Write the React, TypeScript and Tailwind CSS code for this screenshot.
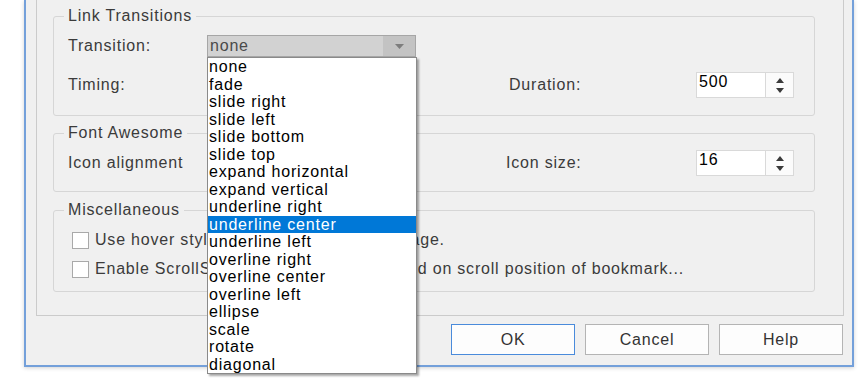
import React from 'react';

const transitions = [
  'none',
  'fade',
  'slide right',
  'slide left',
  'slide bottom',
  'slide top',
  'expand horizontal',
  'expand vertical',
  'underline right',
  'underline center',
  'underline left',
  'overline right',
  'overline center',
  'overline left',
  'ellipse',
  'scale',
  'rotate',
  'diagonal',
];

const Caret = ({ up }: { up?: boolean }) => (
  <svg width="8" height="5" viewBox="0 0 8 5">
    <path d={up ? 'M0 5 L4 0 L8 5 Z' : 'M0 0 L8 0 L4 5 Z'} fill="#3a3a3a" />
  </svg>
);

const SpinBox = ({ value }: { value: string }) => (
  <div className="flex h-[26px] w-[98px] border border-[#d9d9d9] bg-white">
    <div className="flex-1 pl-[2px] leading-[18px] text-black">{value}</div>
    <div className="flex w-[28px] flex-col items-center justify-center gap-[5px] border-l border-[#d9d9d9] bg-[#fbfbfb]">
      <Caret up />
      <Caret />
    </div>
  </div>
);

const Group = ({ title, children, className }: { title: string; children: React.ReactNode; className: string }) => (
  <fieldset className={`rounded-[3px] border border-[#d6d6d6] pl-[14px] ${className}`}>
    <legend className="-ml-[4px] px-[4px] leading-[20px] text-[#3b3b3b]">{title}</legend>
    {children}
  </fieldset>
);

const Check = ({ label }: { label: string }) => (
  <div className="flex h-[18px] items-center whitespace-nowrap pl-[4px]">
    <div className="h-[17px] w-[17px] shrink-0 border border-[#a9a9a9] bg-white" />
    <span className="ml-[6px] text-[#3b3b3b]">{label}</span>
  </div>
);

const Button = ({ label, primary }: { label: string; primary?: boolean }) => (
  <button
    className={`h-[31px] w-[124px] border bg-[#fdfdfd] text-[#333] ${primary ? 'border-[#4a8bdb]' : 'border-[#b4b4b4]'}`}
  >
    {label}
  </button>
);

export default function App() {
  return (
    <div className="relative h-[386px] w-[865px] overflow-hidden bg-white font-['Liberation_Sans',Arial,sans-serif] text-[16px] tracking-[0.8px]">
      <div className="ml-[24px] w-[830px] border-x-2 border-b-2 border-[#74a0da] bg-[#f0f0f0] shadow-[0_1px_4px_rgba(0,0,0,0.18)]">
        <div className="ml-[10px] mr-[8px] border-x border-b border-[#cbcbcb] pb-[23px] pl-[16px] pr-[28px] pt-[6px]">
          <Group title="Link Transitions" className="pb-[17px]">
            <div className="mt-[9px] flex h-[22px] items-center">
              <span className="w-[139px] text-[#3b3b3b]">Transition:</span>
              <div className="flex h-[22px] w-[209px] border border-[#a6a6a6] bg-[#d2d2d2]">
                <span className="flex-1 pl-[2px] leading-[20px] text-[#4a4a4a]">none</span>
                <div className="flex w-[32px] items-center justify-center bg-[#c3c3c3]">
                  <svg width="9" height="5" viewBox="0 0 9 5">
                    <path d="M0 0 L9 0 L4.5 5 Z" fill="#7d7d7d" />
                  </svg>
                </div>
              </div>
            </div>
            <div className="mt-[15px] flex h-[26px] items-center">
              <span className="w-[441px] text-[#3b3b3b]">Timing:</span>
              <span className="w-[187px] text-[#3b3b3b]">Duration:</span>
              <SpinBox value="500" />
            </div>
          </Group>

          <Group title="Font Awesome" className="mt-[7px] pb-[15px]">
            <div className="mt-[7px] flex h-[26px] items-center">
              <span className="w-[438px] text-[#3b3b3b]">Icon alignment</span>
              <span className="w-[190px] text-[#3b3b3b]">Icon size:</span>
              <SpinBox value="16" />
            </div>
          </Group>

          <Group title="Miscellaneous" className="mt-[8px] pb-[13px]">
            <div className="mt-[11px] flex flex-col gap-[11px]">
              <Check label="Use hover style for links to the current page." />
              <Check label="Enable ScrollSpy to highlight items, based on scroll position of bookmark..." />
            </div>
          </Group>
        </div>

        <div className="flex justify-end gap-[10px] pb-[10px] pr-[9px] pt-[8px]">
          <Button label="OK" primary />
          <Button label="Cancel" />
          <Button label="Help" />
        </div>
      </div>

      <ul className="absolute left-[207px] top-[57px] w-[210px] border border-[#8a8a8a] bg-white shadow-[2px_2px_2px_rgba(0,0,0,0.35)]">
        {transitions.map((t) => (
          <li
            key={t}
            className={`h-[17.5px] whitespace-nowrap pl-[1px] leading-[17.5px] ${t === 'underline center' ? 'bg-[#0078d7] text-white' : 'text-black'}`}
          >
            {t}
          </li>
        ))}
      </ul>
    </div>
  );
}
